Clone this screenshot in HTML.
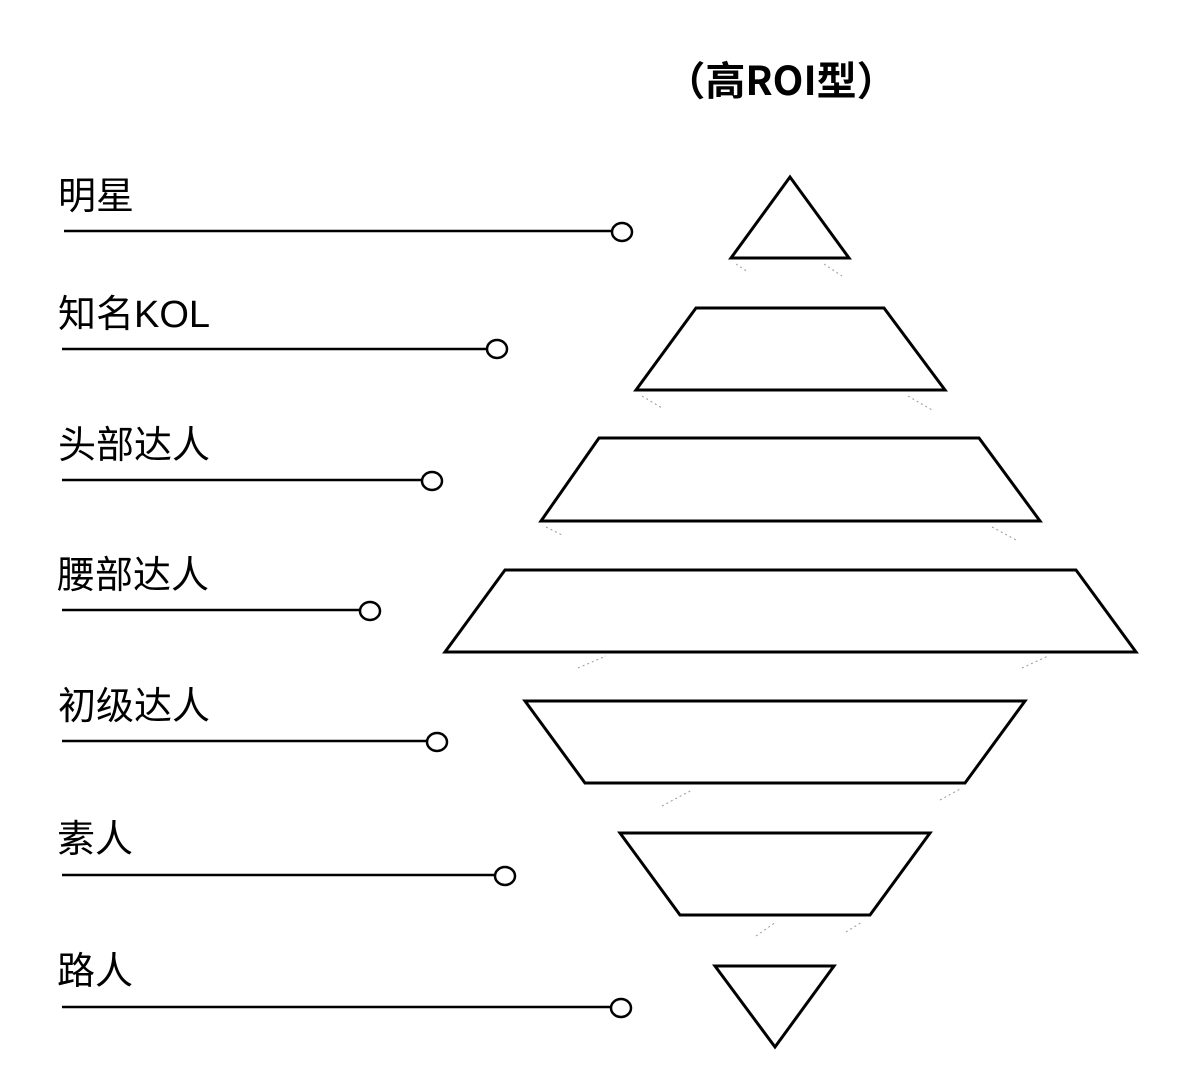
<!DOCTYPE html>
<html><head><meta charset="utf-8"><style>html,body{margin:0;padding:0;background:#fff}svg{display:block}</style></head>
<body>
<svg width="1195" height="1083" viewBox="0 0 1195 1083" xmlns="http://www.w3.org/2000/svg">
<rect width="1195" height="1083" fill="#fff"/>
<g font-family="'Liberation Sans','Noto Sans CJK SC',sans-serif" font-size="38" fill="#000">
<text x="781" y="95" text-anchor="middle" font-weight="bold" font-size="40" font-family="'Noto Sans CJK SC',sans-serif">（高ROI型）</text>
<text x="58" y="209">明星</text>
<text x="58" y="327">知名KOL</text>
<text x="58" y="458">头部达人</text>
<text x="57" y="588">腰部达人</text>
<text x="58" y="719">初级达人</text>
<text x="57" y="852">素人</text>
<text x="57" y="984">路人</text>
</g>
<g stroke="#000" stroke-width="2.5" fill="#fff">
<line x1="64" y1="231" x2="612" y2="231"/><ellipse cx="622" cy="232" rx="10" ry="9"/>
<line x1="62" y1="349" x2="488" y2="349"/><ellipse cx="497" cy="349" rx="10" ry="9"/>
<line x1="62" y1="480" x2="422" y2="480"/><ellipse cx="432" cy="481" rx="10" ry="9"/>
<line x1="62" y1="610" x2="360" y2="610"/><ellipse cx="370" cy="611" rx="10" ry="9"/>
<line x1="62" y1="741" x2="427" y2="741"/><ellipse cx="437" cy="742" rx="10" ry="9"/>
<line x1="62" y1="875" x2="495" y2="875"/><ellipse cx="505" cy="876" rx="10" ry="9"/>
<line x1="62" y1="1007" x2="611" y2="1007"/><ellipse cx="621" cy="1008" rx="10" ry="9"/>
</g>
<g stroke="#000" stroke-width="3" fill="none" stroke-linejoin="miter">
<polygon points="790,177 731,258 849,258"/>
<polygon points="696,308 884,308 945,390 636,390"/>
<polygon points="599,438 979,438 1040,521 541,521"/>
<polygon points="505,570 1076,570 1136,652 445,652"/>
<polygon points="525,701 1025,701 965,783 585,783"/>
<polygon points="620,833 930,833 870,915 680,915"/>
<polygon points="715,966 834,966 775,1047"/>
</g>
<g stroke="#999" stroke-width="1" stroke-dasharray="2,3">
<line x1="736" y1="264" x2="748" y2="272"/><line x1="824" y1="264" x2="842" y2="276"/>
<line x1="642" y1="396" x2="662" y2="408"/><line x1="908" y1="396" x2="932" y2="410"/>
<line x1="546" y1="527" x2="562" y2="535"/><line x1="992" y1="527" x2="1018" y2="541"/>
<line x1="578" y1="668" x2="606" y2="656"/><line x1="1022" y1="668" x2="1048" y2="656"/>
<line x1="662" y1="806" x2="692" y2="790"/><line x1="940" y1="800" x2="962" y2="788"/>
<line x1="756" y1="936" x2="776" y2="922"/><line x1="846" y1="932" x2="862" y2="922"/>
</g>
</svg>
</body></html>
